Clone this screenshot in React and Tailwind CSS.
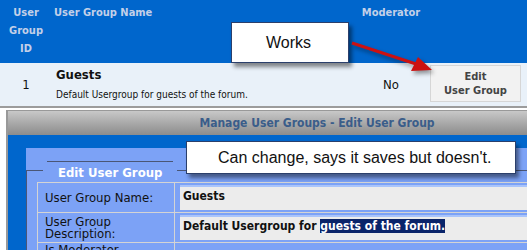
import React from "react";

const tahoma = "font-['DejaVu_Sans_Condensed','DejaVu_Sans',sans-serif]";

const Callout = ({ className, children }) => (
  <div
    className={`absolute bg-white border border-[#2b3f6b] shadow-[3px_4px_4px_rgba(0,0,0,0.45)] flex items-center font-['Liberation_Sans',Arial,sans-serif] text-[16px] text-[#111] ${className}`}
  >
    {children}
  </div>
);

export default function App() {
  return (
    <div className={`relative w-[527px] h-[250px] overflow-hidden bg-white ${tahoma}`}>
      {/* list table header */}
      <div className="grid grid-cols-[52px_300px_78px_97px] h-[63px] bg-[#0066cc] text-[#c3d0e8] text-[11px] font-bold leading-[18px] pt-[4px]">
        <div className="text-center">
          User
          <br />
          Group
          <br />
          ID
        </div>
        <div className="pl-[2px]">User Group Name</div>
        <div className="text-center">Moderator</div>
        <div />
      </div>

      {/* row */}
      <div className="grid grid-cols-[52px_300px_78px_97px] h-[45px] bg-[#e9f1f9] border-b-2 border-[#9c9c9c] text-[#111]">
        <div className="flex items-center justify-center text-[13px]">1</div>
        <div className="pl-[4px] pt-[4px]">
          <div className="text-[13px] font-bold leading-[16px]">Guests</div>
          <div className="text-[10px] leading-[12px] mt-[6px]">
            Default Usergroup for guests of the forum.
          </div>
        </div>
        <div className="flex items-center justify-center text-[13px]">No</div>
        <div>
          <div className="mt-[2px] w-[91px] h-[37px] bg-[#f2f2f2] border border-[#d6d6d6] flex flex-col items-center justify-center text-[11px] font-bold leading-[14px] text-[#444]">
            <span>Edit</span>
            <span>User Group</span>
          </div>
        </div>
      </div>

      {/* dialog */}
      <div className="ml-[6px] mt-[2px] w-[620px] border-l-2 border-t border-[#999]">
        <div className="h-[24px] bg-gradient-to-b from-[#c8c8c8] to-[#8c8c8c] text-center text-[12px] font-bold leading-[24px] text-[#3a5d8a]">
          Manage User Groups - Edit User Group
        </div>
        <div className="bg-[#0066cc] pl-[18px] pt-[13px] h-[120px]">
          <div className="bg-[#7ca2f6] pt-[13px] h-full">
            <fieldset className="border border-[#4a5676] pl-[10px] pb-[4px]">
              <legend className="ml-[6px] px-[4px]">
                <div className="border-t border-[#4a5676] pt-[4px] px-[11px] text-[13px] font-bold leading-[13px] text-white">
                  Edit User Group
                </div>
              </legend>
              <table className="mt-[3px] w-[560px] border-collapse text-[#111]">
                <tbody>
                  <tr className="h-[30px]">
                    <td className="w-[137px] border border-[#d4d4d4] pl-[7px] text-[13px]">
                      User Group Name:
                    </td>
                    <td className="border border-[#d4d4d4] p-[2px] pl-[5px]">
                      <div className="h-[25px] bg-[#ececec] border-t-2 border-[#a9c4fb] pl-[3px] pt-[2px] text-[12px] font-bold leading-[15px]">
                        Guests
                      </div>
                    </td>
                  </tr>
                  <tr className="h-[30px]">
                    <td className="border border-[#d4d4d4] pl-[7px] text-[13px] leading-[12px]">
                      User Group
                      <br />
                      Description:
                    </td>
                    <td className="border border-[#d4d4d4] p-[2px] pl-[5px]">
                      <div className="h-[25px] bg-[#ececec] border-t-2 border-[#a9c4fb] pl-[3px] pt-[2px] text-[12px] font-bold leading-[15px] whitespace-nowrap">
                        Default Usergroup for{" "}
                        <span className="bg-[#0a246a] text-white">guests of the forum.</span>
                      </div>
                    </td>
                  </tr>
                  <tr className="h-[30px]">
                    <td className="border border-[#d4d4d4] pl-[7px] text-[13px] leading-[12px] align-top pt-[1px]">
                      Is Moderator
                    </td>
                    <td className="border border-[#d4d4d4]" />
                  </tr>
                </tbody>
              </table>
            </fieldset>
          </div>
        </div>
      </div>

      {/* annotations */}
      <Callout className="left-[231px] top-[22px] w-[118px] h-[41px] pl-[34px]">Works</Callout>
      <Callout className="left-[186px] top-[141px] w-[330px] h-[33px] pl-[31px]">
        Can change, says it saves but doesn't.
      </Callout>
      <svg
        className="absolute left-0 top-0 drop-shadow-[2px_3px_2px_rgba(0,0,0,0.4)]"
        width="527"
        height="250"
      >
        <line x1="352" y1="43" x2="416" y2="64" stroke="#cc1111" strokeWidth="3" />
        <polygon points="432,70 411,71 418,57" fill="#cc1111" />
      </svg>
    </div>
  );
}
